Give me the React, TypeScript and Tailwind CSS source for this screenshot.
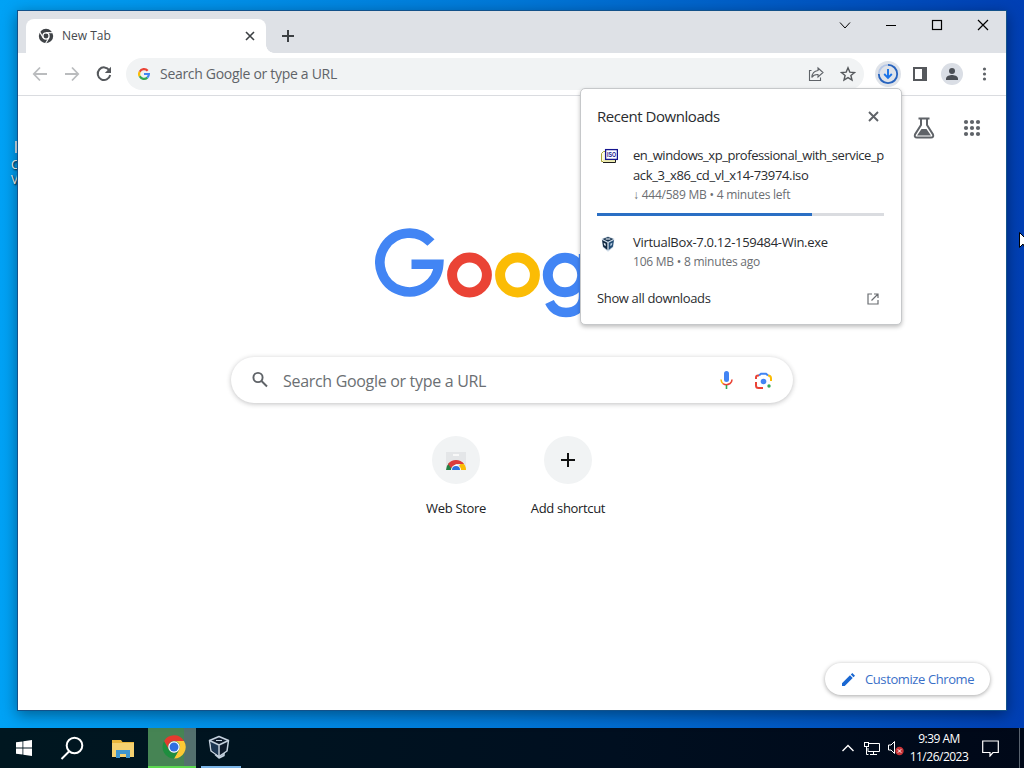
import React from 'react';

type IconProps = { className?: string };

const ChromeMono = () => (
  <svg className="h-4 w-4" viewBox="0 0 24 24" fill="#3f4347">
    <circle cx="12" cy="12" r="10.8" />
    <circle cx="12" cy="12" r="5.6" fill="#fff" />
    <circle cx="12" cy="12" r="3.7" />
    <g stroke="#fff" strokeWidth="1.7">
      <path d="M12 7h10.500" />
      <path d="M12 7h10.500" transform="rotate(120 12 12)" />
      <path d="M12 7h10.500" transform="rotate(240 12 12)" />
    </g>
  </svg>
);

const ChromeColor = () => (
  <svg className="h-6 w-6" viewBox="0 0 48 48">
    <path d="M24 12h20A23 23 0 0 0 4.1 12.5l10 17.3A11.5 11.5 0 0 1 24 12z" fill="#e33b2e" />
    <path d="M34 30 24 47A23 23 0 0 0 43.9 12H24a11.5 11.5 0 0 1 10 18z" fill="#fcc934" />
    <path d="M14 30 4.1 12.5A23 23 0 0 0 24 47l10-17a11.5 11.5 0 0 1-20 0z" fill="#1e8e3e" />
    <circle cx="24" cy="24" r="11.5" fill="#fff" />
    <circle cx="24" cy="24" r="9" fill="#2f6fe0" />
  </svg>
);

const GoogleG = () => (
  <svg className="h-3 w-3" viewBox="0 0 24 24" fill="none" strokeWidth="4.4">
    <path d="M19.4 5.6A9.8 9.8 0 0 0 3.4 7.4" stroke="#ea4335" />
    <path d="M3.4 7.4a9.8 9.8 0 0 0 0 9.2" stroke="#fbbc05" />
    <path d="M3.4 16.6a9.8 9.8 0 0 0 15.2 2.6" stroke="#34a853" />
    <path d="M18.6 19.2A9.8 9.8 0 0 0 21.8 12H12" stroke="#4285f4" />
  </svg>
);

const GoogleLogo = () => (
  <svg className="h-[93px] w-[274px]" viewBox="375 227 274 93" fill="none" role="img" aria-label="Google">
    <path d="M431 242.600A29.400 29.400 0 1 0 438.700 264.300H411.500" stroke="#4285f4" strokeWidth="9.6" />
    <circle cx="469.500" cy="275" r="17.400" stroke="#ea4335" strokeWidth="10" />
    <circle cx="517.500" cy="275" r="17.400" stroke="#fbbc05" strokeWidth="10" />
    <circle cx="565" cy="275" r="17.200" stroke="#4285f4" strokeWidth="10" />
    <path d="M583.500 254v42c0 11-8 16.500-17.500 16.500-7.500 0-13.500-4-16.500-10.500" stroke="#4285f4" strokeWidth="9.400" />
  </svg>
);

const VBox = ({ className }: IconProps) => (
  <svg className={className} viewBox="0 0 24 24">
    <path d="M12 .5 21.500 4 20 17l-8 6.500L4 17 2.500 4z" fill="#ccd9e6" />
    <path d="M12 1.500 20 4.500 12 8.500 4 4.500z" fill="#16314d" />
    <path d="M3 6l8 4v11L4.800 16z" fill="#10273f" />
    <path d="M21 6l-8 4v11l6.200-5z" fill="#234c74" />
    <path d="M8.500 4.500h7" stroke="#dde6ef" strokeWidth="1.800" />
    <path d="M5.500 10l3 1.500v4l-2.500-2z" fill="#dde6ef" />
    <path d="M18.500 10l-3 1.500v4l2.500-2z" fill="#b3c9de" />
  </svg>
);

const VBoxTask = () => (
  <svg className="h-6 w-6" viewBox="0 0 24 24" fill="#0d1a2a" stroke="#c5d2df" strokeWidth="1.500" strokeLinejoin="round">
    <path d="M8 19.500 12 23l5-2.500v-3" fill="#8296aa" />
    <path d="M12 1.500 21.500 5.500 20 16l-8 5.500L4 16 2.500 5.500z" />
    <path d="M3.500 6.500 11 10v10L5 15.500z" fill="#1d3753" stroke="none" />
    <path d="M2.500 5.500 12 10l9.500-4.500M12 10v11.500" fill="none" />
    <path d="M9 5.500h6" strokeWidth="1" />
  </svg>
);

const IsoIcon = () => (
  <svg className="h-4 w-[17px]" viewBox="0 0 17 16">
    <path d="M5 3.500H2.500l-2 2v8H5" fill="#fffce0" stroke="#a9a23a" />
    <path d="M2 11.500h12v2.500H2z" fill="#efedb0" />
    <path d="M2 14.500h12.500V12" fill="none" stroke="#1d1d1d" />
    <rect x="4.600" y="1.600" width="11.800" height="9.800" fill="#fff" stroke="#15158f" strokeWidth="1.300" />
    <text x="6" y="9.200" fontSize="7" fontWeight="700" fill="#15158f" fontFamily="Liberation Sans, sans-serif" textLength="9" lengthAdjust="spacingAndGlyphs">ISO</text>
  </svg>
);

const WindowBar = () => (
  <div className="flex h-[42px] bg-[#dee1e6] pl-2">
    <div className="mt-2 flex h-[34px] w-[240px] items-center rounded-t-lg bg-white pl-3 pr-2.5">
      <ChromeMono />
      <span className="ml-2 flex-1 text-[12px] text-[#45494d]">New Tab</span>
      <svg className="h-3 w-3" viewBox="0 0 12 12" stroke="#3c4043" strokeWidth="1.600">
        <path d="M2 2l8 8M10 2l-8 8" />
      </svg>
    </div>
    {/* flared foot of the active tab */}
    <div className="h-2 w-2 self-end bg-[radial-gradient(circle_at_top_right,#dee1e6_7.500px,#fff_8px)]" />
    <svg className="ml-2 mt-[19px] h-3 w-3" viewBox="0 0 12 12" stroke="#3c4043" strokeWidth="2">
      <path d="M6 0v12M0 6h12" />
    </svg>
    <div className="ml-auto flex h-7 items-center text-black">
      <svg className="w-[46px]" viewBox="0 0 46 28" fill="none" stroke="currentColor">
        <path d="M18 11.500l5 5.500 5-5.500" />
      </svg>
      <svg className="w-[46px]" viewBox="0 0 46 28" stroke="currentColor">
        <path d="M18 14.500h10" />
      </svg>
      <svg className="w-[46px]" viewBox="0 0 46 28" fill="none" stroke="currentColor" strokeWidth="1.200">
        <rect x="18.500" y="9.500" width="9" height="9" />
      </svg>
      <svg className="w-[46px]" viewBox="0 0 46 28" stroke="currentColor" strokeWidth="1.200">
        <path d="M18 9l10 10M28 9 18 19" />
      </svg>
    </div>
  </div>
);

const Toolbar = () => (
  <div className="flex h-[43px] items-center border-b border-[#dadce0] pr-[14px] pl-[14px]">
    <svg className="h-4 w-4" viewBox="0 0 16 16" fill="none" stroke="#babcbe" strokeWidth="1.800">
      <path d="M15 8H2M8 1.500 1.800 8 8 14.500" />
    </svg>
    <svg className="ml-4 h-4 w-4" viewBox="0 0 16 16" fill="none" stroke="#babcbe" strokeWidth="1.800">
      <path d="M1 8h13M8 1.500 14.200 8 8 14.500" />
    </svg>
    <svg className="ml-4 h-4 w-4" viewBox="0 0 16 16" fill="none" stroke="#55585c" strokeWidth="2">
      <path d="M13.300 4.200A6.300 6.300 0 1 0 14.200 9" />
      <path d="M15 .8V7H8.800z" fill="#55585c" stroke="none" />
    </svg>
    <div className="ml-[14px] flex h-8 w-[738px] items-center rounded-full bg-[#f1f3f4] pr-2 pl-3">
      <GoogleG />
      <span className="ml-2.5 flex-1 pb-0.5 text-[14px] tracking-[-0.300px] text-[#5f6368]">Search Google or type a URL</span>
      <svg className="mr-4 h-4 w-4" viewBox="0 0 16 16" fill="none" stroke="#5f6368" strokeWidth="1.100">
        <path d="M3.500 4.500H1.500v10h11V11.500" />
        <path d="M10 2l5 4.500-5 4.500V8.500C7 8.300 5 9.500 3.800 11.500 4 8 6 5 10 4.500z" />
      </svg>
      <svg className="h-4 w-4" viewBox="0 0 16 16" fill="none" stroke="#55585c" strokeWidth="1.400">
        <path d="M8 1.800l1.800 4.300 4.700.4-3.600 3 1.100 4.600L8 11.600l-4 2.500 1.100-4.600-3.600-3 4.700-.4z" />
      </svg>
    </div>
    <svg className="ml-2.5 h-7 w-7 shrink-0" viewBox="0 0 28 28" fill="none">
      <circle cx="14" cy="14" r="13" fill="#dfe3e9" />
      <circle cx="14" cy="14" r="9.200" stroke="#b4c6e6" strokeWidth="1.800" />
      <path d="M14 4.800a9.200 9.200 0 1 1-9.200 9.200" stroke="#2763bd" strokeWidth="1.800" />
      <path d="M14 9v8.500M10.200 14l3.800 3.800 3.800-3.800" stroke="#1a73e8" strokeWidth="1.900" />
    </svg>
    <svg className="ml-[11px] h-[14px] w-[14px] shrink-0" viewBox="0 0 14 14" fill="none">
      <rect x="1" y="1" width="12" height="12" stroke="#55585c" strokeWidth="2" />
      <path d="M9 1h4v12H9z" fill="#55585c" />
    </svg>
    <svg className="ml-3.5 h-[22px] w-[22px] shrink-0" viewBox="0 0 22 22" fill="#4b4f55">
      <circle cx="11" cy="11" r="11" fill="#dadee5" />
      <circle cx="11" cy="8" r="3" />
      <path d="M5 17v-1.500C5 13 9 12 11 12s6 1 6 3.500V17z" />
    </svg>
    <svg className="ml-auto h-4 w-4" viewBox="0 0 16 16" fill="#5f6368">
      <circle cx="8.500" cy="3" r="1.600" />
      <circle cx="8.500" cy="8" r="1.600" />
      <circle cx="8.500" cy="13" r="1.600" />
    </svg>
  </div>
);

const Downloads = () => (
  <div className="absolute top-[77px] left-[562px] h-[237px] w-[322px] rounded-[5px] border border-[#c6c8ca] bg-white px-4 text-[13px] text-[#2a2c2f] shadow-[0_2px_4px_rgba(0,0,0,0.25)]">
    <div className="mt-[17px] flex h-5 items-center justify-between pr-1.5">
      <span className="text-[15px] tracking-[-0.450px]">Recent Downloads</span>
      <svg className="h-[11px] w-[11px]" viewBox="0 0 11 11" stroke="#5f6368" strokeWidth="1.900">
        <path d="M1 1l9 9M10 1l-9 9" />
      </svg>
    </div>
    <div className="mt-[19px] flex">
      <div className="w-9 shrink-0 pt-[3px] pl-1">
        <IsoIcon />
      </div>
      <div className="whitespace-nowrap">
        <p className="leading-5 tracking-[-0.430px]">en_windows_xp_professional_with_service_p</p>
        <p className="leading-5 tracking-[-0.350px]">ack_3_x86_cd_vl_x14-73974.iso</p>
        <p className="text-[12px] leading-5 tracking-[-0.230px] text-[#6b6e72]">↓ 444/589 MB • 4 minutes left</p>
      </div>
    </div>
    <div className="mt-2 h-[3px] w-[287px] bg-[#dadce0]">
      <div className="h-full w-3/4 bg-[#2a6fc4]" />
    </div>
    <div className="mt-4 flex">
      <div className="w-9 shrink-0 pt-1 pl-[3px]">
        <VBox className="h-4 w-4" />
      </div>
      <div>
        <p className="leading-5 tracking-[-0.300px]">VirtualBox-7.0.12-159484-Win.exe</p>
        <p className="text-[12px] leading-5 tracking-[-0.230px] text-[#6b6e72]">106 MB • 8 minutes ago</p>
      </div>
    </div>
    <div className="mt-[17px] flex h-5 items-center justify-between pr-[6px]">
      <span className="tracking-[-0.350px]">Show all downloads</span>
      <svg className="h-3 w-3" viewBox="0 0 12 12" fill="none" stroke="#6b6e72" strokeWidth="1.200">
        <path d="M5 1H1v10h10V7M7 1h4v4M11 1 4.500 7.500" />
      </svg>
    </div>
  </div>
);

const NewTabPage = () => (
  <div className="relative h-[615px]">
    <div className="absolute top-[21px] right-[25px] flex items-center gap-7">
      <svg className="h-[22px] w-[22px]" viewBox="0 0 22 22" fill="none" stroke="#5f6368" strokeWidth="2">
        <path d="M5.500 1.500h11M8 2v6L2 17.500Q1 20.500 4 20.500h14Q21 20.500 20 17.500L14 8V2" />
        <path d="M8.500 12h5l4.500 6.500H4z" fill="#5f6368" stroke="none" />
      </svg>
      <svg className="h-[18px] w-[18px]" viewBox="0 0 18 18" fill="#5f6368">
        {[3, 9, 15].map((y) => [3, 9, 15].map((x) => <circle key={`${x}-${y}`} cx={x} cy={y} r="2.100" />))}
      </svg>
    </div>
    <div className="flex flex-col items-center pt-[131px]">
      <GoogleLogo />
      <div className="mt-[37px] flex h-[46px] w-[562px] items-center rounded-full bg-white pr-[21px] pl-5 shadow-[0_1px_5px_rgba(32,33,36,0.28)]">
        <svg className="h-[18px] w-[18px]" viewBox="0 0 18 18" fill="none" stroke="#5f6368" strokeWidth="1.900">
          <circle cx="7" cy="6.500" r="4.600" />
          <path d="M10.500 10 16 15.500" />
        </svg>
        <span className="ml-[14px] flex-1 pt-0.5 text-[16px] tracking-[-0.310px] text-[#6b6f73]">Search Google or type a URL</span>
        <svg className="h-[18px] w-[13px]" viewBox="0 0 13 18" fill="none">
          <rect x="4" y="0" width="5" height="11" rx="2.500" fill="#4285f4" />
          <path d="M1 8.500Q1.200 11 3 12.700" stroke="#fbbc04" strokeWidth="1.600" />
          <path d="M3 12.700Q6.500 15 10 12.500 12 11 12 8.500" stroke="#ea4335" strokeWidth="1.600" />
          <path d="M6.500 14v4" stroke="#34a853" strokeWidth="1.600" />
        </svg>
        <svg className="ml-[22px] h-[17px] w-[17px]" viewBox="0 0 17 17" fill="none" strokeWidth="2">
          <path d="M1 7V5.500Q1 3.500 3 3.500h1M1 10v3.500Q1 16 3.500 16H8" stroke="#ea4335" />
          <path d="M4 3.500 6 1.800h5l2 1.700" stroke="#4285f4" />
          <path d="M13 3.500q3 0 3 3V9" stroke="#fbbc04" />
          <circle cx="8.500" cy="9.500" r="2.800" fill="#4285f4" />
          <circle cx="14" cy="14" r="1.700" fill="#34a853" />
        </svg>
      </div>
      <div className="mt-[33px] flex text-[13px] tracking-[-0.330px] text-[#202124]">
        <div className="flex w-28 flex-col items-center">
          <div className="flex h-12 w-12 items-center justify-center rounded-full bg-[#f1f3f4]">
            <svg className="mt-1 h-5 w-5" viewBox="0 0 20 20">
              <path d="M0 0h20v18H0z" fill="#e4e6e8" />
              <path d="M7 2h6v2H7z" fill="#f8f8f8" />
              <path d="M0 18a10 10 0 0 1 3-7l7 7z" fill="#268044" />
              <path d="M20 18a10 10 0 0 0-4-8l-6 8z" fill="#fbbc04" />
              <path d="M2 12a10 10 0 0 1 16 0h-8l-5 4z" fill="#dc3c3c" />
              <path d="M5 18a5 5 0 0 1 10 0z" fill="#fff" />
              <path d="M6 18a4 4 0 0 1 8 0z" fill="#2e71df" />
            </svg>
          </div>
          <span className="mt-3.5 leading-5">Web Store</span>
        </div>
        <div className="flex w-28 flex-col items-center">
          <div className="flex h-12 w-12 items-center justify-center rounded-full bg-[#f1f3f4]">
            <svg className="h-3.5 w-3.5" viewBox="0 0 14 14" stroke="#111" strokeWidth="2">
              <path d="M7 0v14M0 7h14" />
            </svg>
          </div>
          <span className="mt-3.5 leading-5">Add shortcut</span>
        </div>
      </div>
    </div>
    <button className="absolute right-4 bottom-4 flex h-8 w-[165px] items-center rounded-full bg-white pl-[17px] text-[13px] tracking-[-0.400px] text-[#3a70c8] shadow-[0_1px_4px_rgba(0,0,0,0.35)]">
      <svg className="mr-2.5 h-[13px] w-[13px]" viewBox="0 0 13 13" fill="#1967d2">
        <path d="M0 13V10.200L8 2.300l2.700 2.700-8 8zM8.800 1.500 10.300 0 13 2.700l-1.500 1.500z" />
      </svg>
      <span className="pt-0.5">Customize Chrome</span>
    </button>
  </div>
);

const Taskbar = () => (
  <div className="flex h-10 items-center bg-[linear-gradient(90deg,#001720,#000f20_60%,#000818)] text-white">
    <div className="flex w-12 justify-center">
      <svg className="h-4 w-4" viewBox="0 0 16 16" fill="#fff">
        <path d="M0 2.300 6.500 1.400v6.200H0zM7.300 1.300 16 0v7.600H7.300zM0 8.400h6.500v6.200L0 13.700zM7.300 8.400H16V16l-8.700-1.300z" />
      </svg>
    </div>
    <div className="flex w-12 justify-center">
      <svg className="h-6 w-6" viewBox="0 0 24 24" fill="none" stroke="#fff" strokeWidth="2">
        <circle cx="14.500" cy="9.500" r="7.800" />
        <path d="M9 15.500 1.500 23" />
      </svg>
    </div>
    <div className="flex w-[52px] justify-center pl-0.5">
      <svg className="h-[19px] w-[22px]" viewBox="0 0 22 19">
        <path d="M0 1h9l1.500 2H22v15H0z" fill="#e9b63c" />
        <path d="M0 4h22v14H0z" fill="#f5d170" />
        <path d="M4 11h14v8h-4v-4H8v4H4z" fill="#3f96cf" />
      </svg>
    </div>
    <div className="flex h-full w-12 items-center justify-center border-b-2 border-[#5bd850] bg-[linear-gradient(90deg,#468454_75%,#53706e_75%)] pl-1">
      <ChromeColor />
    </div>
    <div className="ml-[5px] flex h-full w-10 items-center justify-center border-b-2 border-[#7bb5e8] pr-1">
      <VBoxTask />
    </div>
    <svg className="ml-auto h-3 w-3" viewBox="0 0 12 12" fill="none" stroke="#fff" strokeWidth="1.400">
      <path d="M.5 9 6 3.500 11.500 9" />
    </svg>
    <svg className="ml-2.5 h-[15px] w-4" viewBox="0 0 16 15" fill="none" stroke="#fff">
      <path d="M5 2.500h10.500v8H4V7M9.500 10.500v3M6 13.500h7M2.500 5.500v8h2" />
      <rect x=".5" y="1.500" width="4" height="4" />
    </svg>
    <svg className="ml-2 h-4 w-4" viewBox="0 0 16 16" fill="none" stroke="#fff">
      <path d="M6.500 13.500v-12L3 5H.5v5H3z" />
      <circle cx="11.500" cy="11" r="4.200" fill="#c93437" stroke="none" />
      <path d="M9.800 9.300l3.400 3.400M13.200 9.300l-3.400 3.400" />
    </svg>
    <div className="ml-1 w-[62px] text-center text-[12px] leading-[18px] tracking-[-0.500px] whitespace-nowrap">
      <p>9:39 AM</p>
      <p>11/26/2023</p>
    </div>
    <svg className="mr-5 ml-3 h-[17px] w-[17px]" viewBox="0 0 17 17" fill="none" stroke="#fff" strokeWidth="1.200">
      <path d="M.7 1h15.600v11.500H11L8 16v-3.500H.7z" />
    </svg>
    <div className="mr-1 h-full w-px bg-[#59636f]" />
  </div>
);

const App = () => {
  return (
    <div className="flex h-[768px] w-[1024px] flex-col overflow-hidden bg-[linear-gradient(90deg,#00a2f5,#0078d8_50%,#003fb4)] font-['Open_Sans','Noto_Sans',sans-serif]">
      <div className="relative h-[728px] pt-[10px] pl-[17px]">
        <div className="absolute top-[141px] left-[11px] text-[12px] leading-[15px] text-white">
          <div className="ml-1 h-3 w-1 bg-[#cfe2ee]" />
          <p className="mt-1 [text-shadow:1px_1px_2px_#000]">C</p>
          <p className="[text-shadow:1px_1px_2px_#000]">V</p>
        </div>
        <div className="relative h-[701px] w-[990px] border border-[#12518a] bg-white shadow-[0_4px_14px_rgba(0,0,0,0.4)]">
          <WindowBar />
          <Toolbar />
          <NewTabPage />
          <Downloads />
        </div>
        <svg className="absolute top-[232px] left-[1019px] h-[18px] w-3" viewBox="0 0 12 18" fill="#fff" stroke="#000">
          <path d="M.5.5v15l3.500-3.500 2.500 5 2-1-2.500-5h5z" />
        </svg>
      </div>
      <Taskbar />
    </div>
  );
};

export default App;
